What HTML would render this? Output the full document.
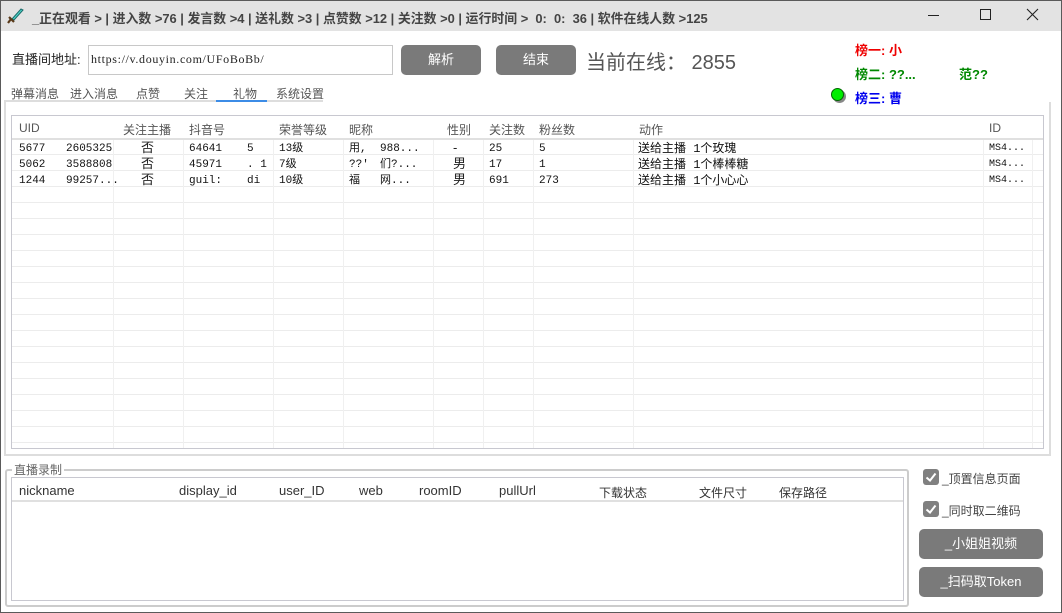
<!DOCTYPE html>
<html><head><meta charset="utf-8"><style>
*{margin:0;padding:0;box-sizing:border-box}
body{width:1062px;height:613px;overflow:hidden;background:#fff;font-family:"Liberation Sans","Microsoft YaHei","Noto Sans CJK SC",sans-serif;position:relative;font-size:12px;color:#222}
.a{position:absolute;white-space:nowrap}
.win{position:absolute;left:0;top:0;width:1062px;height:613px;border:1px solid #5a5a5a}
.title{position:absolute;left:1px;top:1px;width:1060px;height:30px;background:#e3e3e3}
.btn{position:absolute;background:#7a7a7a;border-radius:5px;color:#fff;font-size:13px;text-align:center}
.mono{font-family:"Liberation Mono","Noto Sans CJK SC",monospace;font-size:11px}
.cb{position:absolute;width:16px;height:16px;background:#808080;border-radius:3px}
</style></head><body>
<div class="win"></div>
<div class="title"></div>
<svg class="a" style="left:6px;top:7px" width="18" height="18" viewBox="0 0 18 18"><path d="M6 12 L15 2 L17 3 L8 13Z" fill="#4fd6c8" stroke="#1a6a6a" stroke-width="1"/><path d="M3 10 L8 15 M5 12 L2 16" stroke="#5a3a1a" stroke-width="2.2"/></svg>
<div class="a" style="left:32px;top:8px;font-size:12.9px;font-weight:bold;color:#444">_正在观看 &gt; | 进入数 &gt;76 | 发言数 &gt;4 | 送礼数 &gt;3 | 点赞数 &gt;12 | 关注数 &gt;0 | 运行时间 &gt;&nbsp; 0:&nbsp; 0:&nbsp; 36 | 软件在线人数 &gt;125</div>
<div class="a" style="left:928px;top:15px;width:11px;height:1px;background:#222"></div>
<div class="a" style="left:980px;top:9px;width:11px;height:11px;border:1px solid #222"></div>
<svg class="a" style="left:1026px;top:8px" width="13" height="13"><path d="M1 1L12 12M12 1L1 12" stroke="#222" stroke-width="1.1"/></svg>

<div class="a" style="left:12px;top:49px;font-size:13px">直播间地址:</div>
<div class="a" style="left:88px;top:45px;width:305px;height:30px;border:1px solid #c8c8c8"></div>
<div class="a" style="left:91px;top:52px;font-family:'Liberation Serif',serif;font-size:12px;letter-spacing:0.65px">https://v.douyin.com/UFoBoBb/</div>
<div class="btn" style="left:401px;top:45px;width:80px;height:30px;line-height:30px">解析</div>
<div class="btn" style="left:496px;top:45px;width:80px;height:30px;line-height:30px">结束</div>
<div class="a" style="left:586px;top:46px;font-size:20px;color:#555">当前在线：&nbsp;2855</div>
<div class="a" style="left:855px;top:40px;font-size:13px;font-weight:bold;color:#e00">榜一: 小</div>
<div class="a" style="left:855px;top:64px;font-size:13px;font-weight:bold;color:#080">榜二: ??...&nbsp;&nbsp;&nbsp;&nbsp;&nbsp;&nbsp;&nbsp;&nbsp;&nbsp;&nbsp;&nbsp;&nbsp;范??</div>
<div class="a" style="left:831px;top:88px;width:13px;height:13px;border-radius:50%;background:#0e0;border:1px solid #060;box-shadow:2px 2px 0 #888"></div>
<div class="a" style="left:855px;top:88px;font-size:13px;font-weight:bold;color:#00e">榜三: 曹</div>

<div class="a" style="left:11px;top:85px;color:#555">弹幕消息</div>
<div class="a" style="left:70px;top:85px;color:#555">进入消息</div>
<div class="a" style="left:136px;top:85px;color:#555">点赞</div>
<div class="a" style="left:184px;top:85px;color:#555">关注</div>
<div class="a" style="left:233px;top:85px;color:#555">礼物</div>
<div class="a" style="left:276px;top:85px;color:#555">系统设置</div>
<div class="a" style="left:4px;top:100px;width:319px;height:2px;background:#ddd"></div>
<div class="a" style="left:216px;top:100px;width:51px;height:2px;background:#3c8ce6"></div>

<div class="a" style="left:4px;top:102px;width:1047px;height:354px;border:2px solid #ddd;border-top:none"></div>
<div class="a" style="left:1049px;top:102px;width:2px;height:354px;background:#ddd"></div>
<div class="a" style="left:11px;top:115px;width:1033px;height:334px;border:1px solid #c8c8d0;overflow:hidden">
 <div class="a" style="left:0;top:22px;width:1031px;height:310px;background:repeating-linear-gradient(to bottom,#ececec 0,#ececec 1px,transparent 1px,transparent 16px)"></div>
 <div class="a" style="left:0;top:22px;width:1031px;height:2px;background:#e0e0e0"></div>
 <div class="a" style="left:101px;top:24px;width:1px;height:310px;background:#f0f0f0"></div>
 <div class="a" style="left:171px;top:24px;width:1px;height:310px;background:#f0f0f0"></div>
 <div class="a" style="left:261px;top:24px;width:1px;height:310px;background:#f0f0f0"></div>
 <div class="a" style="left:331px;top:24px;width:1px;height:310px;background:#f0f0f0"></div>
 <div class="a" style="left:421px;top:24px;width:1px;height:310px;background:#f0f0f0"></div>
 <div class="a" style="left:471px;top:24px;width:1px;height:310px;background:#f0f0f0"></div>
 <div class="a" style="left:521px;top:24px;width:1px;height:310px;background:#f0f0f0"></div>
 <div class="a" style="left:621px;top:24px;width:1px;height:310px;background:#f0f0f0"></div>
 <div class="a" style="left:971px;top:24px;width:1px;height:310px;background:#f0f0f0"></div>
 <div class="a" style="left:1020px;top:24px;width:1px;height:310px;background:#f0f0f0"></div>
</div>
<div class="a" style="left:19px;top:121px;color:#555">UID</div>
<div class="a" style="left:123px;top:121px;color:#555">关注主播</div>
<div class="a" style="left:189px;top:121px;color:#555">抖音号</div>
<div class="a" style="left:279px;top:121px;color:#555">荣誉等级</div>
<div class="a" style="left:349px;top:121px;color:#555">昵称</div>
<div class="a" style="left:447px;top:121px;color:#555">性别</div>
<div class="a" style="left:489px;top:121px;color:#555">关注数</div>
<div class="a" style="left:539px;top:121px;color:#555">粉丝数</div>
<div class="a" style="left:639px;top:121px;color:#555">动作</div>
<div class="a" style="left:989px;top:121px;color:#555">ID</div>

<div class="a mono" style="left:19px;top:141px;line-height:16px;color:#111">5677<br>5062<br>1244</div>
<div class="a mono" style="left:66px;top:141px;line-height:16px;color:#111">2605325<br>3588808<br>99257...</div>
<div class="a" style="left:141px;top:140px;line-height:16px;font-size:13px">否<br>否<br>否</div>
<div class="a mono" style="left:189px;top:141px;line-height:16px;color:#111">64641<br>45971<br>guil:</div>
<div class="a mono" style="left:247px;top:141px;line-height:16px;color:#111">5<br>.&nbsp;1<br>di</div>
<div class="a mono" style="left:279px;top:141px;line-height:16px;color:#111">13级<br>7级<br>10级</div>
<div class="a mono" style="left:349px;top:141px;line-height:16px;color:#111">用,<br>??'<br>福</div>
<div class="a mono" style="left:380px;top:141px;line-height:16px;color:#111">988...<br>们?...<br>网...</div>
<div class="a" style="left:453px;top:140px;line-height:16px;font-size:13px">-<br>男<br>男</div>
<div class="a mono" style="left:489px;top:141px;line-height:16px;color:#111">25<br>17<br>691</div>
<div class="a mono" style="left:539px;top:141px;line-height:16px;color:#111">5<br>1<br>273</div>
<div class="a mono" style="left:638px;top:141px;line-height:16px;color:#111;font-size:12px">送给主播 1个玫瑰<br>送给主播 1个棒棒糖<br>送给主播 1个小心心</div>
<div class="a mono" style="left:989px;top:141px;line-height:16px;color:#111;font-size:10px">MS4...<br>MS4...<br>MS4...</div>

<div class="a" style="left:5px;top:469px;width:904px;height:138px;border:2px solid #ccc;border-radius:3px"></div>
<div class="a" style="left:12px;top:461px;background:#fff;padding:0 2px;color:#666">直播录制</div>
<div class="a" style="left:11px;top:477px;width:893px;height:124px;border:1px solid #c8c8d0"></div>
<div class="a" style="left:12px;top:500px;width:891px;height:2px;background:#e0e0e0"></div>
<div class="a" style="left:19px;top:483px;color:#333;font-size:13px">nickname</div>
<div class="a" style="left:179px;top:483px;color:#333;font-size:13px">display_id</div>
<div class="a" style="left:279px;top:483px;color:#333;font-size:13px">user_ID</div>
<div class="a" style="left:359px;top:483px;color:#333;font-size:13px">web</div>
<div class="a" style="left:419px;top:483px;color:#333;font-size:13px">roomID</div>
<div class="a" style="left:499px;top:483px;color:#333;font-size:13px">pullUrl</div>
<div class="a" style="left:599px;top:484px;color:#333">下载状态</div>
<div class="a" style="left:699px;top:484px;color:#333">文件尺寸</div>
<div class="a" style="left:779px;top:484px;color:#333">保存路径</div>

<div class="cb" style="left:923px;top:469px"></div>
<svg class="a" style="left:923px;top:469px" width="16" height="16"><path d="M3.5 8.5L7 11.5L12.5 4.5" stroke="#fff" stroke-width="2" fill="none"/></svg>
<div class="a" style="left:942px;top:470px;color:#444">_顶置信息页面</div>
<div class="cb" style="left:923px;top:501px"></div>
<svg class="a" style="left:923px;top:501px" width="16" height="16"><path d="M3.5 8.5L7 11.5L12.5 4.5" stroke="#fff" stroke-width="2" fill="none"/></svg>
<div class="a" style="left:942px;top:502px;color:#444">_同时取二维码</div>
<div class="btn" style="left:919px;top:529px;width:124px;height:30px;line-height:30px">_小姐姐视频</div>
<div class="btn" style="left:919px;top:567px;width:124px;height:30px;line-height:30px">_扫码取Token</div>
</body></html>
